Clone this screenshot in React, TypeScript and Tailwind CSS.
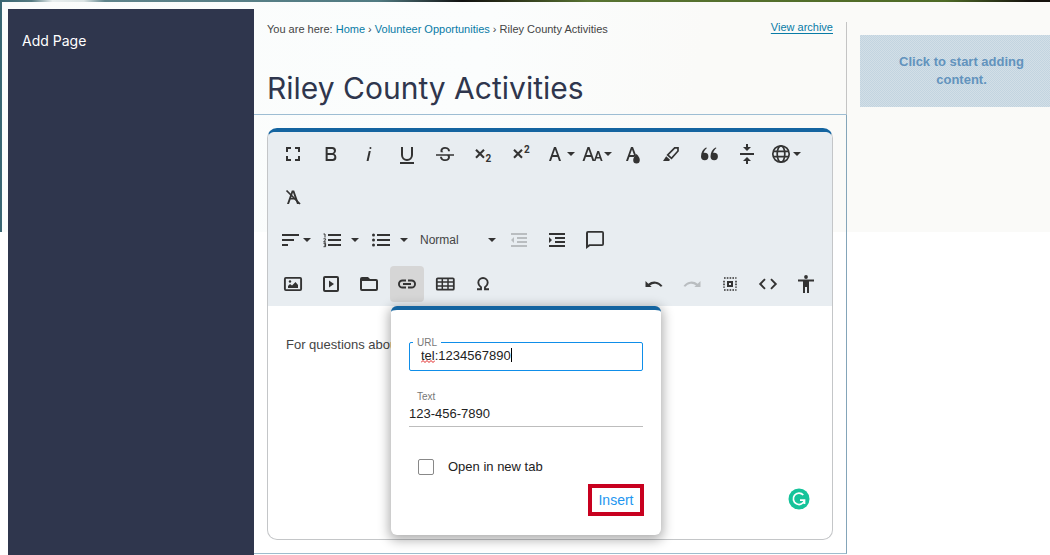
import React, { useState } from "react";

function Icon({ children, className = "" }: { children: React.ReactNode; className?: string }) {
  return (
    <svg viewBox="0 0 24 24" aria-hidden="true" className={`size-6 shrink-0 fill-current ${className}`}>
      {children}
    </svg>
  );
}

function Tool({ label, children, className = "", disabled = false }: {
  label: string; children: React.ReactNode; className?: string; disabled?: boolean;
}) {
  return (
    <button type="button" aria-label={label} disabled={disabled}
      className={`flex h-9 w-[34px] shrink-0 items-center justify-center rounded disabled:text-[#b9bdc0] ${className}`}>
      {children}
    </button>
  );
}

function Caret() {
  return (
    <svg viewBox="0 0 8 4" aria-hidden="true" className="h-1 w-2 shrink-0 fill-current">
      <path d="M0 0h8L4 4z" />
    </svg>
  );
}

const lines = (d: string, w = 2) => <path d={d} fill="none" stroke="currentColor" strokeWidth={w} />;

function TopRow() {
  return (
    <div className="flex flex-wrap gap-x-1 gap-y-[7px]">
      <Tool label="Fullscreen"><Icon><path d="M5 5h5v2H7v3H5zM14 5h5v5h-2V7h-3zM5 14h2v3h3v2H5zM17 14h2v5h-5v-2h3z" /></Icon></Tool>
      <Tool label="Bold"><Icon><path d="M15.25,11.8h0A3.68,3.68,0,0,0,17,9a3.93,3.93,0,0,0-3.86-4H6.65V19h7a3.74,3.74,0,0,0,3.7-3.78V15.1A3.64,3.64,0,0,0,15.25,11.8ZM8.65,7h4.2a2.09,2.09,0,0,1,2,1.3,2.09,2.09,0,0,1-1.37,2.61,2.23,2.23,0,0,1-.63.09H8.65Zm4.6,10H8.65V13h4.6a2.09,2.09,0,0,1,2,1.3,2.09,2.09,0,0,1-1.37,2.61A2.23,2.23,0,0,1,13.25,17Z" /></Icon></Tool>
      <Tool label="Italic"><Icon><path d="M11.76,9h2l-2.2,10h-2Zm1.68-4a1,1,0,1,0,1,1,1,1,0,0,0-1-1Z" /></Icon></Tool>
      <Tool label="Underline"><Icon><path d="M5 20h14v2H5z" />{lines("M7 5v8a5 5 0 0 0 10 0V5")}</Icon></Tool>
      <Tool label="Strikethrough"><Icon><path d="M3,12.2H21v1.5H16.63a3.6,3.6,0,0,1,.35,1.59,3.25,3.25,0,0,1-1.31,2.7A5.55,5.55,0,0,1,12.2,19a6.44,6.44,0,0,1-2.62-.54,4.46,4.46,0,0,1-1.89-1.49,3.67,3.67,0,0,1-.67-2.16V14.7H9.02v.11a2.18,2.18,0,0,0,.85,1.83,3.69,3.69,0,0,0,2.33.68,3.39,3.39,0,0,0,2.08-.55,1.73,1.73,0,0,0,.7-1.47,1.7,1.7,0,0,0-.65-1.43,3,3,0,0,0-.27-.18H3ZM16.34,7.06A4.18,4.18,0,0,0,14.62,5.55,5.63,5.63,0,0,0,12.11,5,5.16,5.16,0,0,0,8.75,6.06,3.36,3.36,0,0,0,7.44,8.77a3.23,3.23,0,0,0,.32,1.43h2.6c-.08-.05-.19-.11-.25-.16a1.61,1.61,0,0,1-.65-1.3,1.8,1.8,0,0,1,.69-1.51,3.13,3.13,0,0,1,1.97-.55,3.05,3.05,0,0,1,2.1.67,2.35,2.35,0,0,1,.74,1.83v.11h2V9.17A3.9,3.9,0,0,0,16.34,7.06Z" /></Icon></Tool>
      <Tool label="Subscript"><Icon>{lines("M5 7.700l8 8M13 7.700l-8 8", 2.1)}<text x="14.500" y="20" fontSize="10" fontWeight="700" fontFamily="Roboto, sans-serif">2</text></Icon></Tool>
      <Tool label="Superscript"><Icon>{lines("M5 7.700l8 8M13 7.700l-8 8", 2.1)}<text x="15" y="10.500" fontSize="10" fontWeight="700" fontFamily="Roboto, sans-serif">2</text></Icon></Tool>
      <Tool label="Font family" className="-mr-px"><Icon><path d="M11 5h2l5 14h-2l-1.400-4H9.400L8 19H6zM12 7.500L10 13h4z" /></Icon><Caret /></Tool>
      <Tool label="Font size" className="-mr-px"><Icon><path d="M7.500 5h2l5 14h-2l-1.400-4H5.900L4.500 19h-2zM8.500 7.500L6.500 13h4zM17.300 9h1.800L22.600 19h-1.800l-.9-2.600h-3.500l-.9 2.600h-1.700zM18.200 11.300l-1.200 3.600h2.400z" /></Icon><Caret /></Tool>
      <Tool label="Text color"><Icon><path d="M10 5h2l3 8-1.500 1.500L13.300 15H8.400L7 19H5zM11 7.500L9 13h4z" /><path d="M15.500 12c1.500 1.700 3.300 3.800 3.300 6a3.300 3.600 0 0 1-6.600 0c0-2.200 1.800-4.300 3.300-6z" /></Icon></Tool>
      <Tool label="Background color"><Icon>{lines("M15.700 5.800h3.300v3.200L12.500 16.300 8.700 13z", 1.700)}<path d="M7.200 14.200l3.800 3.600-.9 1.200H4z" /></Icon></Tool>
      <Tool label="Quote"><Icon><path d="M10 6L9 5.500c-3 1.500-5 5-5 9a3.700 3.700 0 1 0 3.700-3.700c-.4 0-.8 0-1.100.2.600-2 1.800-3.700 3.400-5zM19.500 6L18.500 5.500c-3 1.500-5 5-5 9a3.700 3.700 0 1 0 3.700-3.700c-.4 0-.8 0-1.100.2.600-2 1.800-3.700 3.400-5z" /></Icon></Tool>
      <Tool label="Horizontal line"><Icon><path d="M5 11h14v2H5zM11 2h2v3h3l-4 4-4-4h3zM11 22h2v-3h3l-4-4-4 4h3z" /></Icon></Tool>
      <Tool label="Language"><Icon><g fill="none" stroke="currentColor" strokeWidth="1.700"><circle cx="12" cy="12" r="8.200" /><ellipse cx="12" cy="12" rx="3.800" ry="8.200" /><path d="M4 9.300h16M4 14.700h16" /></g></Icon><Caret /></Tool>
      <Tool label="Clear formatting"><Icon><path d="M10.800 5.500h2.400l4.800 13.500h-2l-1.600-4.500H9.600L8 19H6zM12 7.500L10.200 13h3.600z" />{lines("M5.500 5.500l13.500 13.500", 1.7)}</Icon></Tool>
    </div>
  );
}

function FormatRow() {
  return (
    <div className="flex items-center">
      <button type="button" aria-label="Align" className="flex h-9 w-[42px] items-center">
        <Icon><path d="M3 6h17v2H3zM3 11h12v2H3zM3 16h6v2H3z" /></Icon><Caret />
      </button>
      <button type="button" aria-label="Ordered list" className="flex h-9 w-[49px] items-center gap-1.5">
        <Icon><path d="M7 6h13v2H7zM7 11h13v2H7zM7 16h13v2H7z" />{lines("M2.500 6h1.500v3.500M2.500 10.800h2v1L2.700 14H5M2.500 15.300h2.100v3.400H2.500M3 17h1.500", 1)}</Icon><Caret />
      </button>
      <button type="button" aria-label="Unordered list" className="flex h-9 w-[50px] items-center gap-1.5">
        <Icon><path d="M7 6h13v2H7zM7 11h13v2H7zM7 16h13v2H7z" /><circle cx="3.500" cy="7" r="1.500" /><circle cx="3.500" cy="12" r="1.500" /><circle cx="3.500" cy="17" r="1.500" /></Icon><Caret />
      </button>
      <button type="button" className="flex h-9 w-[76px] items-center justify-between text-xs text-[#444]">
        Normal<span className="text-[#333]"><Caret /></span>
      </button>
      <div className="ml-1.5 flex gap-1">
        <Tool label="Decrease indent" disabled><Icon><path d="M4 5h16v2H4zM10 9h10v2H10zM10 13h10v2H10zM4 17h16v2H4zM7 9v6l-3-3z" /></Icon></Tool>
        <Tool label="Increase indent"><Icon><path d="M4 5h16v2H4zM10 9h10v2H10zM10 13h10v2H10zM4 17h16v2H4zM4 9v6l3-3z" /></Icon></Tool>
        <Tool label="Comment"><Icon><path d="M5 3h14a2 2 0 0 1 2 2v11a2 2 0 0 1-2 2H7l-4 3V5a2 2 0 0 1 2-2zm0 1.800v12.300l1.200-.9H19.200V4.800z" /></Icon></Tool>
      </div>
    </div>
  );
}

function InsertRow() {
  return (
    <div className="flex justify-between">
      <div className="flex gap-1">
        <Tool label="Insert image"><Icon><rect x="3.900" y="5.900" width="16.200" height="12.200" rx="1" fill="none" stroke="currentColor" strokeWidth="1.900" /><path d="M7 16v-2l2-2 2 1.500 3.500-3.500L17 13v3z" /><circle cx="9" cy="9.500" r="1.200" /></Icon></Tool>
        <Tool label="Insert video"><Icon><rect x="5" y="5" width="14" height="14" rx="1" fill="none" stroke="currentColor" strokeWidth="2" /><path d="M10 8.500l5 3.500-5 3.500z" /></Icon></Tool>
        <Tool label="Insert file"><Icon><path d="M5 5h6l2 2h6a2 2 0 0 1 2 2v8a2 2 0 0 1-2 2H5a2 2 0 0 1-2-2V7a2 2 0 0 1 2-2zm0 4v8h14V9z" /></Icon></Tool>
        <Tool label="Insert link" className="bg-[#d6d6d6]"><Icon><path d="M11 16.500H7.500a4.500 4.500 0 0 1 0-9H11v1.900H7.500a2.600 2.600 0 0 0 0 5.200H11zM13 16.500h3.500a4.500 4.500 0 0 0 0-9H13v1.900h3.500a2.600 2.600 0 0 1 0 5.200H13zM8 11.100h8v1.800H8z" /></Icon></Tool>
        <Tool label="Insert table"><Icon><rect x="3.800" y="6.300" width="17" height="11.400" rx="1" fill="none" stroke="currentColor" strokeWidth="1.800" />{lines("M9.300 6v12M15 6v12M4 10h17M4 14h17", 1.5)}</Icon></Tool>
        <Tool label="Special characters"><Icon>{lines("M6 17.200h4v-2C8.500 14 7.300 12.700 7.300 10.700a4.700 4.700 0 0 1 9.400 0c0 2-1.200 3.300-2.700 4.500v2h4", 1.9)}</Icon></Tool>
      </div>
      <div className="flex gap-1">
        <Tool label="Undo"><Icon><path d="M4 9.500l2.300 2.300A9.500 9.500 0 0 1 20.500 14l-1.800.7A7.700 7.700 0 0 0 8 13.400L9.700 15H3.500V9z" /></Icon></Tool>
        <Tool label="Redo" disabled><Icon><path d="M20 9.500l-2.300 2.300A9.500 9.500 0 0 0 3.500 14l1.800.7A7.700 7.700 0 0 1 16 13.400L14.300 15h6.200V9z" /></Icon></Tool>
        <Tool label="Select all"><Icon><path d="M10 10h4v4h-4z" fill="none" stroke="currentColor" strokeWidth="2" /><path d="M6 6h12.500M6 18h12.500M6 8.800v7M18 8.800v7" fill="none" stroke="currentColor" strokeWidth="1.600" strokeDasharray="1.600 1.200" /></Icon></Tool>
        <Tool label="Code view"><Icon>{lines("M9 7.200L4.200 12 9 16.800M15 7.200l4.800 4.800-4.800 4.800", 1.9)}</Icon></Tool>
        <Tool label="Accessibility"><Icon><circle cx="12" cy="5" r="1.900" /><path d="M4 7.500h16v2h-5V21h-2v-6h-2v6H9V9.500H4z" /></Icon></Tool>
      </div>
    </div>
  );
}

function LinkPopup() {
  const [url, setUrl] = useState("tel:1234567890");
  const [text, setText] = useState("123-456-7890");
  return (
    <form onSubmit={(e) => e.preventDefault()}
      className="absolute top-[174px] left-[123px] z-10 flex w-[270px] flex-col rounded-md border-t-4 border-[#1464a0] bg-white px-[18px] pt-[27px] pb-[19px] text-[#222] shadow-[0_3px_12px_2px_rgba(0,0,0,0.32)]">
      <fieldset className="relative min-w-0 rounded-xs border border-[#0f8ee9] pl-[3px]">
        <legend className="h-[11px] px-1 text-[10px] leading-[11px] text-[#777]">
          <label htmlFor="url">URL</label>
        </legend>
        <input id="url" value={url} spellCheck={false} onChange={(e) => setUrl(e.target.value)}
          className="block h-[22px] w-full pr-3 pb-[7px] pl-2 text-[13px] leading-[15px] outline-none" />
        <svg aria-hidden="true" viewBox="0 0 14 3" className="absolute top-3 left-[11px] h-[3px] w-3.5 fill-none stroke-[#e02020]">
          <path d="M0 2.500l2-2 2 2 2-2 2 2 2-2 2 2 2-2" />
        </svg>
        <span aria-hidden="true" className="absolute top-0 left-[101px] h-3.5 w-px bg-black" />
      </fieldset>
      <div className="mt-5 flex flex-col">
        <label htmlFor="text" className="pl-2 text-[10px] leading-3 text-[#777]">Text</label>
        <input id="text" value={text} onChange={(e) => setText(e.target.value)}
          className="h-6 w-full border-b border-[#bdbdbd] pb-0.5 text-[13px] outline-none" />
      </div>
      <label className="mt-8 flex h-4 items-center gap-3.5 pl-[9px] text-[13px]">
        <input type="checkbox" className="size-4 appearance-none rounded-xs border border-[#888] checked:bg-[#0f8ee9]" />
        Open in new tab
      </label>
      <button type="submit" className="mt-[9px] -mr-px h-8 w-14 self-end border-4 border-[#c8001f] text-sm leading-none text-[#1e96f0]">Insert</button>
    </form>
  );
}

function Editor() {
  return (
    <section className="relative flex grow flex-col rounded-[10px] border border-t-4 border-[#c4c6c8] border-t-[#1464a0] bg-white">
      <div className="flex flex-col gap-[7px] rounded-t-md bg-[#e8edf1] pt-1 pr-[9px] pb-1 pl-2 text-[#333]">
        <TopRow />
        <div className="pl-[3px]"><FormatRow /></div>
        <div className="pt-px"><InsertRow /></div>
      </div>
      <div className="min-h-[231px] grow pt-[31px] pl-[18px] text-[13px] leading-4 text-[#444]">For questions about activities</div>
      <LinkPopup />
      <button type="button" aria-label="Grammar check" className="absolute right-[22px] bottom-[29px]">
        <svg viewBox="0 0 22 22" className="size-[22px]" aria-hidden="true">
          <circle cx="11" cy="11" r="10.500" fill="#15c39a" />
          <path d="M15.300 7A5.700 5.700 0 1 0 16.500 12.500M12 12.200h4.500V16" fill="none" stroke="#fff" strokeWidth="1.700" />
        </svg>
      </button>
    </section>
  );
}

export default function App() {
  return (
    <div className="relative isolate flex min-h-screen overflow-hidden bg-white pl-2 font-['Liberation_Sans',Arial,sans-serif]">
      <div aria-hidden="true" className="absolute inset-x-0 top-0 -z-10 h-[232px] bg-[linear-gradient(90deg,#376571_0%,#557b81_3%,#e8eeee_5%,#dbe4e4_8%,#5d838a_10%,#517b82_36%,#111_44%,#282d17_48%,#587332_56%,#4e6a26_90%,#15120e_98%)] pt-0.5 pl-0.5">
        <div className="h-full bg-[linear-gradient(100deg,#fafcfb_0%,#fbfdfd_45%,#fafaf8_65%,#fafaf8_100%)]" />
      </div>
      <nav className="mt-[9px] w-[246px] shrink-0 bg-[#2f364d] px-3.5 pt-5">
        <a href="#add" className="font-['Inter',sans-serif] text-sm leading-5 text-white">Add Page</a>
      </nav>
      <main className="flex min-w-0 flex-1 flex-col pt-[22px] pb-px">
        <header className="h-[93px] border-r border-b border-r-[#c4c4c4] border-b-[#9dbdd3] pr-[13px] pl-[13px] text-[11px] text-[#444]">
          <div className="flex justify-between">
            <p className="leading-3.5">You are here: <a href="#home" className="text-[#087ba6]">Home</a> › <a href="#volunteer" className="text-[#087ba6]">Volunteer Opportunities</a> › Riley County Activities</p>
            <a href="#archive" className="-mt-px h-4 leading-3 text-[#087ba6] underline underline-offset-2">View archive</a>
          </div>
          <h1 className="mt-[33px] font-['Inter',sans-serif] text-[30px] leading-9 font-normal text-[#2f364d]">Riley County Activities</h1>
        </header>
        <div className="flex grow flex-col border-r border-b border-r-[#84a5b9] border-b-[#9dbdcd] p-[13px]">
          <Editor />
        </div>
      </main>
      <aside className="w-[203px] shrink-0 pt-[35px] pl-[13px]">
        <button type="button" className="h-[72px] w-[203px] bg-[#cddbe5] bg-[conic-gradient(#c2d4e0_25%,#d3dfe7_0_50%,#c2d4e0_0_75%,#d3dfe7_0)] bg-[length:2px_2px] px-8 text-[13px] leading-[18px] font-bold text-[#6293bd]">
          Click to start adding content.
        </button>
      </aside>
    </div>
  );
}
